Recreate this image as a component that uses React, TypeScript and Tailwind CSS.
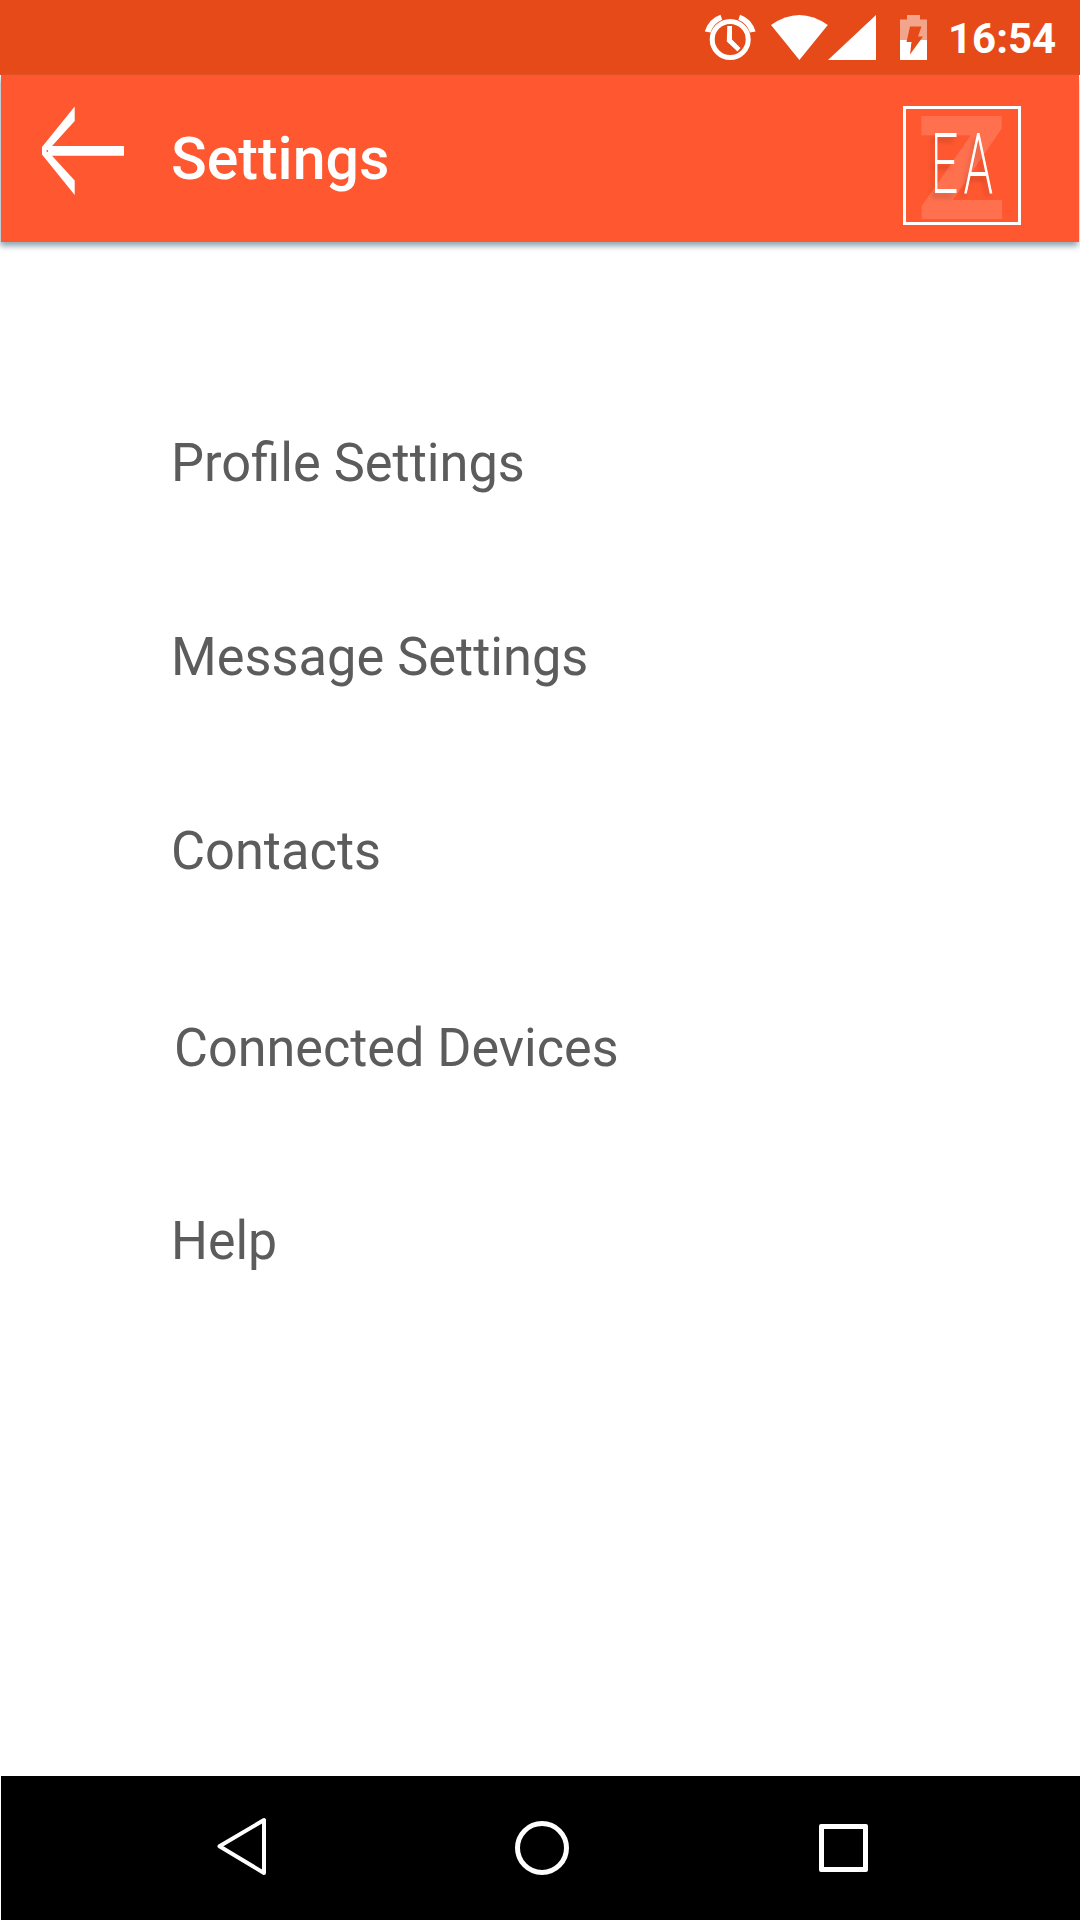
import React from "react";

const items = [
  { label: "Profile Settings", row: "pl-[171px] h-[194px]", text: "scale-x-[.988]" },
  { label: "Message Settings", row: "pl-[171px] h-[194px]", text: "scale-x-[.988]" },
  { label: "Contacts", row: "pl-[171px] h-[197px]", text: "scale-x-[.988]" },
  { label: "Connected Devices", row: "pl-[174px] h-[193px]", text: "scale-x-[.984]" },
  { label: "Help", row: "pl-[171px] h-[194px]", text: "scale-x-[.978]" },
];

function StatusBar() {
  return (
    <div className="flex h-[75px] w-full shrink-0 bg-[#e64a19]">
      <svg className="ml-[690px] h-[75px] w-[250px] shrink-0" viewBox="690 0 250 75" fill="none">
        {/* alarm */}
        <circle cx="730.2" cy="39.5" r="18" stroke="#fff" strokeWidth="5" />
        <path d="M727.3 26h4.700v13.500l8.500 8.500-3 3.500-10.700-10z" fill="#fff" />
        <path d="M704.800 31.500Q709 18.500 720.500 14.800l1.700 5Q713.500 23.500 710.500 32.600z" fill="#fff" />
        <path d="M755.600 31.500Q751.400 18.500 740 14.800L738.400 19.800Q747 23.500 750 32.600z" fill="#fff" />
        {/* wifi */}
        <path d="M799.400 60L771 25Q799.400 5 827.800 25z" fill="#fff" />
        {/* signal */}
        <path d="M828 60L876 15v45z" fill="#fff" />
        {/* battery */}
        <path d="M907 15h13v4.500h7V40H900V19.500h7z" fill="#fff" fillOpacity=".5" />
        <path d="M900 40h27v20h-27z" fill="#fff" />
        <path d="M910 26.500h11.500l-3.500 10h5l-13 18 1.500-12.500h-5z" fill="#e64a19" />
      </svg>
      <span className="mt-[14px] ml-[8px] h-[50px] text-[42px] leading-[50px] font-bold text-white">16:54</span>
    </div>
  );
}

function Header() {
  return (
    <header className="mx-px flex h-[167px] shrink-0 bg-[#ff5830] shadow-[-1px_4px_6px_0_#8fa5b1]">
      <svg className="mt-[30px] ml-[40px] h-[92px] w-[84px] shrink-0" viewBox="41 105 84 92">
        <path d="M74.700 106.500V121L52 146h72v9.700H52l22.700 24.800v14.500L42 154.500v-7.500z" fill="#fff" />
        <circle cx="47.300" cy="151" r=".9" fill="#ff5830" />
      </svg>
      <h1 className="mt-[49px] ml-[46px] h-[70px] text-[59px] leading-[70px] font-medium text-white">Settings</h1>
      <div className="relative mt-[31px] mr-[58px] ml-auto h-[119px] w-[118px] border-[3px] border-white">
        <span className="absolute top-0 left-[11px] text-[145px] leading-[120px] font-black text-white/15">Z</span>
        <span className="absolute top-[18px] left-[24.5px] origin-left scale-x-[.58] text-[81px] leading-[75px] font-thin tracking-[11px] text-white [-webkit-text-stroke:1.800px_white] [text-shadow:-5px_5px_7px_rgba(0,0,0,.28)]">
          EA
        </span>
      </div>
    </header>
  );
}

export default function App() {
  return (
    <div className="flex h-[1920px] w-[1080px] flex-col overflow-hidden bg-white font-[Roboto,sans-serif]">
      <StatusBar />
      <Header />
      <nav className="flex grow flex-col pt-[183px]">
        {items.map((item) => (
          <div key={item.label} className={item.row}>
            <span className={`inline-block origin-left text-[53px] leading-[76px] text-[#5c5c5c] ${item.text}`}>
              {item.label}
            </span>
          </div>
        ))}
      </nav>
      <footer className="ml-px flex h-[144px] shrink-0 bg-black">
        <svg className="mt-[40px] ml-[215px] h-[60px] w-[52px]" viewBox="216 1816 52 60" fill="none">
          <path d="M219.500 1846.300L264 1820v53z" stroke="#fff" strokeWidth="4" strokeLinejoin="round" />
        </svg>
        <div className="mt-[45px] ml-[247px] size-[54px] rounded-full border-[5px] border-white" />
        <div className="mt-[48px] ml-[250px] h-[48px] w-[49px] rounded-[2px] border-[5px] border-white" />
      </footer>
    </div>
  );
}
